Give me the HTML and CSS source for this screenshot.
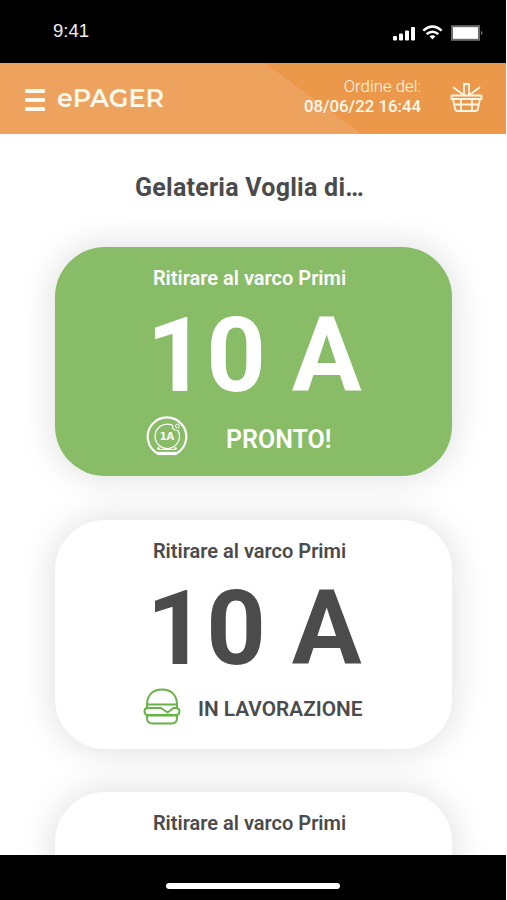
FILE: index.html
```html
<!DOCTYPE html>
<html lang="it">
<head>
    <meta charset="UTF-8">
    <title>ePAGER</title>
    <link rel="stylesheet" href="styles.css">
</head>
<body>

<div class="phone">

    <div class="status">
        <span class="time">9:41</span>
        <svg class="status-icons" width="92" height="18" viewBox="0 0 92 18">
            <g fill="#fff">
                <rect x="2" y="12" width="4" height="4.500" rx="1"/>
                <rect x="8" y="9.500" width="4" height="7" rx="1"/>
                <rect x="14" y="6.500" width="4" height="10" rx="1"/>
                <rect x="20" y="3" width="4" height="13.500" rx="1"/>
                <path d="M38.500 12.200q3-2 6 0l-3 3.200z"/>
            </g>
            <g fill="none" stroke="#fff" stroke-width="2.400">
                <path d="M32.300 6.600q9.200-8 18.400 0"/>
                <path d="M35.600 10.200q5.900-5 11.800 0"/>
            </g>
            <rect x="61" y="2.200" width="27" height="13.600" fill="#fff" stroke="#6b6b6b" stroke-width="2"/>
            <path d="M90.500 7.500q1 1.500 0 3z" fill="#777" stroke="#777"/>
        </svg>
    </div>

    <div class="header">
        <div class="menu">
            <i></i>
            <i></i>
            <i></i>
        </div>
        <div class="logo">ePAGER</div>
        <div class="order">
            <p>Ordine del:</p>
            <p class="date">08/06/22 16:44</p>
        </div>
        <svg class="basket" width="34" height="32" viewBox="0 0 34 32" fill="none" stroke="#fff6e6" stroke-width="1.800" stroke-linejoin="round" stroke-linecap="round">
            <path d="M2.500 14.500h30v3.500h-30zM4 18l2 9.500q.5 2.500 2.700 2.500h17.600q2.200 0 2.700-2.500l2-9.500M5 23.500h25M12 18.500v11M23 18.500v11"/>
            <path d="M15 14v-11h5v11M4.500 6.500l9.500 7M30.500 6.500l-9.500 7"/>
        </svg>
    </div>

    <div class="content">
        <h1>Gelateria Voglia di…</h1>

        <div class="card ready">
            <h2>Ritirare al varco Primi</h2>
            <div class="number">10 A</div>
            <div class="state">
                <svg width="42" height="42" viewBox="0 0 42 42" fill="none" stroke="#fff">
                    <path d="M11.500 38.500a19.300 19.300 0 1 1 19 0z" stroke-width="2.200" stroke-linejoin="round"/>
                    <path d="M11.500 38.500h19" stroke-width="3.200"/>
                    <path d="M32 15.500A12.200 12.200 0 1 1 26.500 10.300q-.5 5 5.500 5.200z" stroke-width="1.200"/>
                    <circle cx="31.500" cy="11" r="1.900" stroke-width="1"/>
                    <path d="M13.500 34.500h15" stroke-width="1"/>
                    <circle cx="12.500" cy="33.500" r="1" fill="#fff"/>
                    <circle cx="29.500" cy="33.500" r="1" fill="#fff"/>
                    <text class="pager-text" x="21" y="25" text-anchor="middle" fill="#fff" stroke="none">1A</text>
                </svg>
                <span>PRONTO!</span>
            </div>
        </div>

        <div class="card working">
            <h2>Ritirare al varco Primi</h2>
            <div class="number">10 A</div>
            <div class="state">
                <svg width="38" height="38" viewBox="0 0 38 38" fill="none" stroke="#66b245" stroke-width="1.900" stroke-linejoin="round">
                    <path d="M4 16.500C4 7 10 1.500 19 1.500s15 5.500 15 15z"/>
                    <path d="M4 16.500v3.500M34 16.500v3.500"/>
                    <path d="M4.500 20H18l6.500 4.500 6-4.500h3q3 .5 3 3.500t-3 3.500h-29q-3 0-3-3.500t3-3.500z"/>
                    <path d="M4 27.500h30v2.500q0 5.500-5.500 5.500h-19Q4 35.500 4 30z"/>
                </svg>
                <span>IN LAVORAZIONE</span>
            </div>
        </div>

        <div class="card">
            <h2>Ritirare al varco Primi</h2>
        </div>
    </div>

    <div class="bottom">
        <div class="home"></div>
    </div>

</div>

</body>
</html>
```
FILE: styles.css
```css
* {
    margin: 0;
    padding: 0;
    box-sizing: border-box;
}

body {
    background: #fff;
    font-family: Roboto, "Liberation Sans", sans-serif;
    color: #4b4b4b;
}

.phone {
    display: flex;
    flex-direction: column;
    width: 507px;
    height: 900px;
    overflow: hidden;
}

.status {
    display: flex;
    justify-content: space-between;
    flex: none;
    width: 506px;
    height: 63px;
    padding: 19px 23px 0 53px;
    background: #000;
}

.time {
    color: #eee;
    font: 18.500px/24px "Liberation Sans", Arial, sans-serif;
}

.status-icons {
    margin-top: 5px;
}

.header {
    display: flex;
    flex: none;
    width: 506px;
    height: 71px;
    padding: 0 23px 0 25px;
    background: linear-gradient(to top right, #eda35d 50%, #ec984a 50%) 265px 0 / 96px 71px no-repeat,
        linear-gradient(90deg, #eda35d 310px, #ec984a 310px);
    color: #fff8ec;
}

.menu {
    display: flex;
    flex-direction: column;
    gap: 5px;
    width: 20px;
    margin-top: 26px;
}

.menu i {
    height: 4px;
    border-radius: 1px;
    background: #fff8ec;
}

.logo {
    margin: 20px 0 0 12px;
    font: 600 25.400px/30px Montserrat, Inter, sans-serif;
}

.order {
    margin: 13px 28px 0 auto;
    text-align: right;
    font-size: 16.800px;
    font-weight: 300;
    line-height: 20px;
    white-space: nowrap;
}

.order .date {
    font-weight: 500;
}

.basket {
    margin-top: 18px;
}

.content {
    flex: 1;
    min-height: 0;
    padding: 0 55px;
    overflow: hidden;
}

h1 {
    height: 113px;
    padding: 38px 8px 0 0;
    font-size: 25px;
    font-weight: 700;
    line-height: 31px;
    letter-spacing: .25px;
    text-align: center;
    white-space: nowrap;
}

.card {
    height: 229px;
    margin-bottom: 43.5px;
    padding-top: 19px;
    border-radius: 50px;
    background: #fff;
    box-shadow: 0 0 36px rgba(0, 0, 0, .14);
}

.card.ready {
    background: #88bc66;
    color: #fff;
}

.card h2 {
    padding-right: 8px;
    font-size: 20px;
    font-weight: 600;
    line-height: 24px;
    text-align: center;
    white-space: nowrap;
}

.number {
    height: 125px;
    padding-left: 1px;
    font-size: 104px;
    font-weight: 700;
    line-height: 132px;
    text-align: center;
}

.state {
    display: flex;
    align-items: center;
    height: 42px;
    padding-left: 91px;
    font-size: 25px;
    font-weight: 600;
    white-space: nowrap;
}

.ready .state span {
    margin: 6px 0 0 38px;
}

.working .state {
    padding-left: 88px;
    font-size: 20.800px;
}

.working .state svg {
    margin-top: -3px;
}

.working .state span {
    margin-left: 17px;
}

.pager-text {
    font: 700 10px "DejaVu Sans", sans-serif;
}

.bottom {
    flex: none;
    width: 506px;
    height: 45px;
    padding-top: 28px;
    background: #000;
}

.home {
    width: 174px;
    height: 6px;
    margin: 0 auto;
    border-radius: 3px;
    background: #fff;
}
```
